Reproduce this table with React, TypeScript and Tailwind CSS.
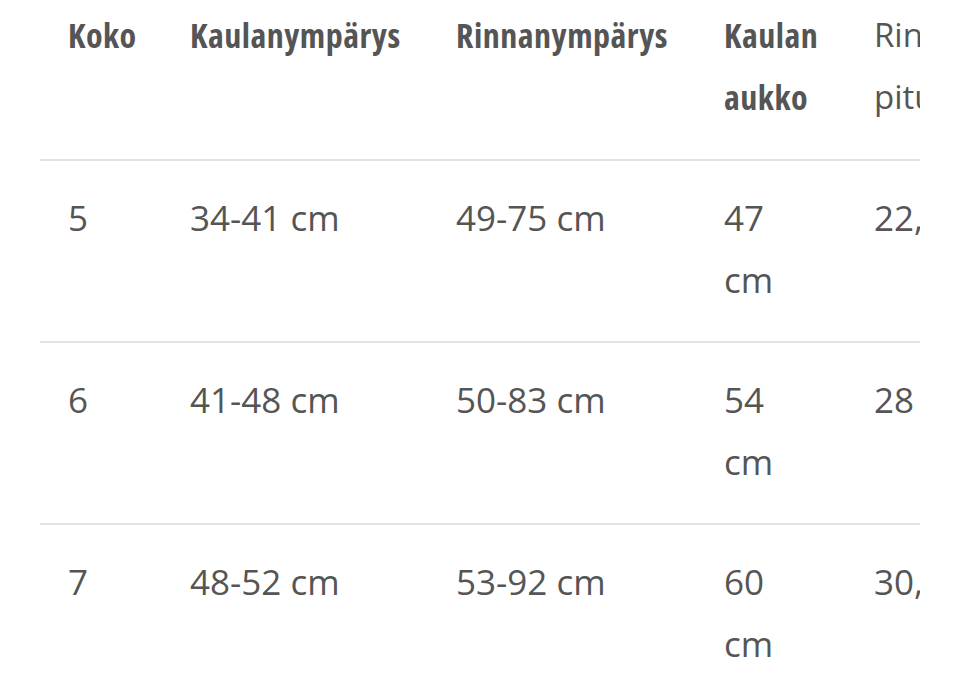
const rows = [
  { size: "5", neck: "34-41 cm", chest: "49-75 cm", opening: ["47", "cm"], length: "22,5 cm" },
  { size: "6", neck: "41-48 cm", chest: "50-83 cm", opening: ["54", "cm"], length: "28 cm" },
  { size: "7", neck: "48-52 cm", chest: "53-92 cm", opening: ["60", "cm"], length: "30,5 cm" },
];

const head = "font-['Open_Sans'] [font-stretch:condensed] font-bold text-[34px] tracking-[0.5px] leading-[62px] text-[#555555] text-left align-top px-[28px] pt-[4px] pb-[31px]";
const cell = "px-[28px] pt-[26px] pb-[30px] align-top";

export default function App() {
  return (
    <div className="h-[685px] w-[960px] overflow-hidden bg-white">
      <div className="ml-[40px] w-[880px] overflow-hidden">
        <table className="w-[1000px] table-fixed border-collapse font-['Open_Sans'] text-[35px] leading-[62px] text-[#555555]">
          <colgroup>
            <col className="w-[122px]" />
            <col className="w-[266px]" />
            <col className="w-[268px]" />
            <col className="w-[150px]" />
            <col className="w-[194px]" />
          </colgroup>
          <thead>
            <tr className="border-b-2 border-[#e3e3e3]">
              <th className={head}>Koko</th>
              <th className={head}>Kaulanympärys</th>
              <th className={head}>Rinnanympärys</th>
              <th className={head}>
                Kaulan
                <br />
                aukko
              </th>
              <th className="px-[28px] pt-[4px] pb-[31px] text-left align-top text-[33px] font-normal whitespace-nowrap">
                Rinnan
                <br />
                pituus
              </th>
            </tr>
          </thead>
          <tbody>
            {rows.map((r) => (
              <tr key={r.size} className="border-b-2 border-[#e3e3e3]">
                <td className={cell}>{r.size}</td>
                <td className={cell}>{r.neck}</td>
                <td className={cell}>{r.chest}</td>
                <td className={cell}>
                  {r.opening[0]}
                  <br />
                  {r.opening[1]}
                </td>
                <td className={cell + " whitespace-nowrap"}>{r.length}</td>
              </tr>
            ))}
          </tbody>
        </table>
      </div>
    </div>
  );
}
